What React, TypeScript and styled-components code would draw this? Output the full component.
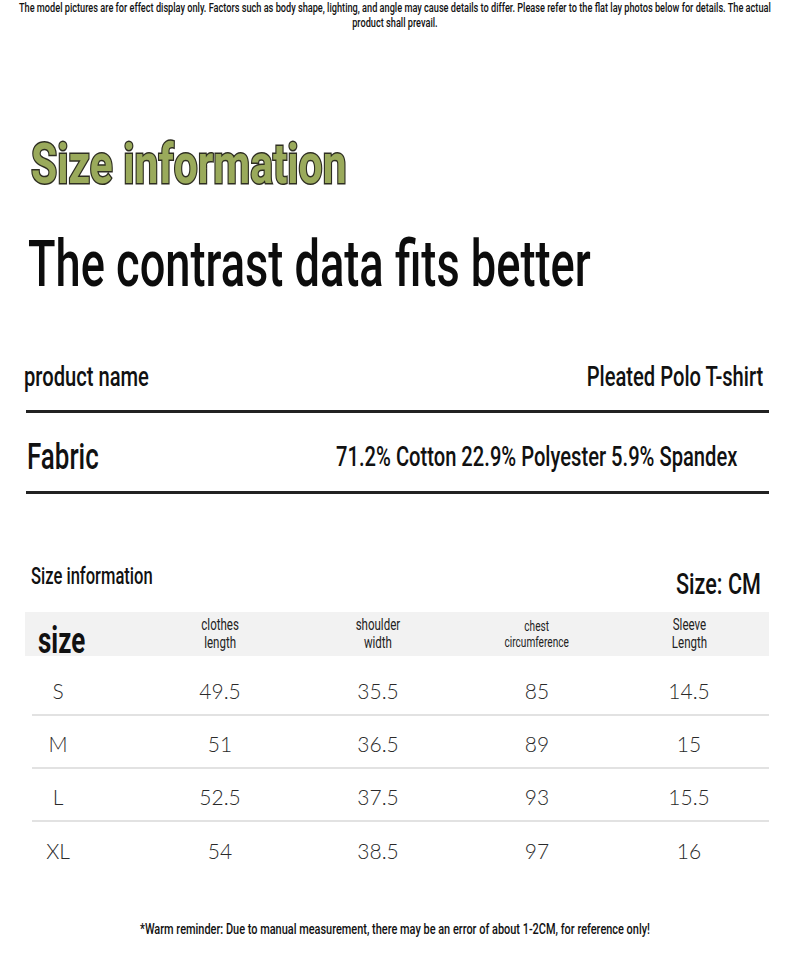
import styled, { createGlobalStyle, css } from 'styled-components';

// the reference uses a narrow grotesque; Roboto squeezed horizontally stands in for it
const narrow = (origin: string, k = 0.72) => css`
  display: inline-block;
  white-space: nowrap;
  transform: scaleX(${k});
  transform-origin: ${origin};
`;

const GlobalStyle = createGlobalStyle`
  body {
    margin: 0;
    background: #fff;
    font-family: Roboto, "Liberation Sans", sans-serif;
    color: #111;
  }
`;

const Page = styled.div`
  width: 790px;
  height: 977px;
  overflow: hidden;
`;

const Notice = styled.p`
  ${narrow('left top', 0.734)};
  display: block;
  width: 1076px;
  margin: 0;
  font-size: 12.5px;
  font-weight: 500;
  line-height: 15px;
  text-align: center;
`;

const Heading = styled.h1`
  ${narrow('left center', 0.76)};
  display: block;
  margin: 106px 0 0 31px;
  font-size: 56px;
  line-height: 56px;
  font-weight: 700;
  color: #9aaa5b;
  -webkit-text-stroke: 3px #2e2e22;
  paint-order: stroke fill;
`;

const Slogan = styled.h2`
  ${narrow('left center', 0.695)};
  display: block;
  margin: 40px 0 0 28px;
  font-size: 65px;
  line-height: 65px;
  font-weight: 500;
  color: #0c0c0c;
`;

const Specs = styled.div`
  margin: 50px 21px 0 26px;
`;

const SpecRow = styled.div<{ $height: number; $pad: number }>`
  display: flex;
  justify-content: space-between;
  align-items: flex-end;
  height: ${(p) => p.$height}px;
  padding-bottom: ${(p) => p.$pad}px;
  box-sizing: border-box;
  border-bottom: 3px solid #222;
`;

const SpecLabel = styled.span<{ $size: number; $shift: number }>`
  ${narrow('left bottom')};
  font-size: ${(p) => p.$size}px;
  line-height: ${(p) => p.$size}px;
  font-weight: 500;
  margin-left: ${(p) => p.$shift}px;
`;

const SpecValue = styled.span<{ $inset: number; $lift?: number }>`
  ${narrow('right bottom')};
  font-size: 28px;
  line-height: 28px;
  font-weight: 500;
  margin-right: ${(p) => p.$inset}px;
  margin-bottom: ${(p) => p.$lift ?? 0}px;
`;

const TableHead = styled.div`
  display: flex;
  justify-content: space-between;
  align-items: flex-end;
  margin: 71px 29px 0 31px;
`;

const TableTitle = styled.span`
  ${narrow('left bottom')};
  font-size: 23px;
  line-height: 23px;
  font-weight: 500;
  margin-bottom: 11px;
`;

const Unit = styled.span`
  ${narrow('right bottom')};
  font-size: 30px;
  line-height: 30px;
  font-weight: 500;
`;

const Table = styled.div`
  margin: 13px 21px 0 25px;
`;

const HeaderRow = styled.div`
  display: grid;
  grid-template-columns: 114px 162px 154px 164px 140px;
  align-items: center;
  height: 44px;
  background: #f2f2f2;
`;

const SizeHead = styled.span`
  ${narrow('left bottom')};
  justify-self: start;
  align-self: end;
  margin: 0 0 -3px 13px;
  font-size: 36px;
  line-height: 36px;
  font-weight: 700;
`;

const ColHead = styled.span<{ $small?: boolean }>`
  ${narrow('center')};
  justify-self: center;
  text-align: center;
  font-size: ${(p) => (p.$small ? '14px' : '16px')};
  line-height: ${(p) => (p.$small ? '16px' : '18px')};
  color: #222;
`;

const Body = styled.div`
  padding-top: 7px;
`;

const BodyRow = styled.div`
  display: grid;
  grid-template-columns: 107px 162px 154px 164px 140px;
  align-items: center;
  height: 53px;
  box-sizing: border-box;
  margin-left: 7px;
  border-bottom: 2px solid #e2e2e2;
  &:last-child {
    border-bottom: none;
  }
`;

const Cell = styled.span<{ $size?: boolean }>`
  font-family: Lato, "Open Sans", sans-serif;
  font-weight: 300;
  font-size: 21px;
  color: #2a2a2a;
  text-align: center;
  width: ${(p) => (p.$size ? '52px' : 'auto')};
  padding-top: 3px;
`;

const Footer = styled.p`
  ${narrow('left top', 0.706)};
  display: block;
  width: 1119px;
  margin: 45px 0 0;
  text-align: center;
  font-size: 15.5px;
  line-height: 18px;
  font-weight: 500;
`;

const rows = [
  ['S', '49.5', '35.5', '85', '14.5'],
  ['M', '51', '36.5', '89', '15'],
  ['L', '52.5', '37.5', '93', '15.5'],
  ['XL', '54', '38.5', '97', '16'],
];

const App = () => {
  return (
    <Page>
      <GlobalStyle />
      <Notice>
        The model pictures are for effect display only. Factors such as body shape, lighting, and angle may cause details to differ. Please refer to the flat lay photos below for details. The actual
        <br />
        product shall prevail.
      </Notice>
      <Heading>Size information</Heading>
      <Slogan>The contrast data fits better</Slogan>
      <Specs>
        <SpecRow $height={66} $pad={19}>
          <SpecLabel $size={28} $shift={-2}>product name</SpecLabel>
          <SpecValue $inset={6}>Pleated Polo T-shirt</SpecValue>
        </SpecRow>
        <SpecRow $height={81} $pad={16}>
          <SpecLabel $size={36} $shift={1}>Fabric</SpecLabel>
          <SpecValue $inset={32} $lift={4}>71.2% Cotton 22.9% Polyester 5.9% Spandex</SpecValue>
        </SpecRow>
      </Specs>
      <TableHead>
        <TableTitle>Size information</TableTitle>
        <Unit>Size: CM</Unit>
      </TableHead>
      <Table>
        <HeaderRow>
          <SizeHead>size</SizeHead>
          <ColHead>clothes<br />length</ColHead>
          <ColHead>shoulder<br />width</ColHead>
          <ColHead $small>chest<br />circumference</ColHead>
          <ColHead>Sleeve<br />Length</ColHead>
        </HeaderRow>
        <Body>
          {rows.map((r) => (
            <BodyRow key={r[0]}>
              {r.map((v, i) => (
                <Cell key={i} $size={i === 0}>{v}</Cell>
              ))}
            </BodyRow>
          ))}
        </Body>
      </Table>
      <Footer>*Warm reminder: Due to manual measurement, there may be an error of about 1-2CM, for reference only!</Footer>
    </Page>
  );
};

export default App;
